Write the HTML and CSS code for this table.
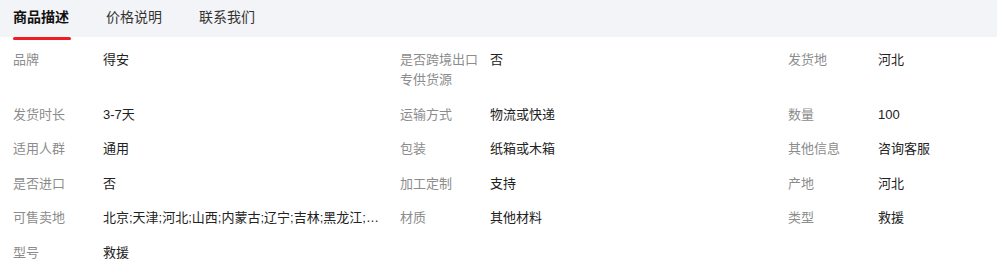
FILE: index.html
```html
<!DOCTYPE html>
<html lang="zh-CN">
<head>
  <meta charset="UTF-8">
  <meta name="viewport" content="width=device-width, initial-scale=1.0">
  <title>商品描述</title>
  <link rel="stylesheet" href="styles.css">
</head>
<body>
  <div class="tabs">
    <span class="tab active">商品描述</span>
    <span class="tab">价格说明</span>
    <span class="tab">联系我们</span>
  </div>

  <div class="attrs">
    <div class="attr"><span class="attr-name">品牌</span><span class="attr-value">得安</span></div>
    <div class="attr"><span class="attr-name">是否跨境出口专供货源</span><span class="attr-value">否</span></div>
    <div class="attr"><span class="attr-name">发货地</span><span class="attr-value">河北</span></div>

    <div class="attr"><span class="attr-name">发货时长</span><span class="attr-value">3-7天</span></div>
    <div class="attr"><span class="attr-name">运输方式</span><span class="attr-value">物流或快递</span></div>
    <div class="attr"><span class="attr-name">数量</span><span class="attr-value">100</span></div>

    <div class="attr"><span class="attr-name">适用人群</span><span class="attr-value">通用</span></div>
    <div class="attr"><span class="attr-name">包装</span><span class="attr-value">纸箱或木箱</span></div>
    <div class="attr"><span class="attr-name">其他信息</span><span class="attr-value">咨询客服</span></div>

    <div class="attr"><span class="attr-name">是否进口</span><span class="attr-value">否</span></div>
    <div class="attr"><span class="attr-name">加工定制</span><span class="attr-value">支持</span></div>
    <div class="attr"><span class="attr-name">产地</span><span class="attr-value">河北</span></div>

    <!-- 地区列表过长，只显示前几项 -->
    <div class="attr"><span class="attr-name">可售卖地</span><span class="attr-value">北京;天津;河北;山西;内蒙古;辽宁;吉林;黑龙江;…</span></div>
    <div class="attr"><span class="attr-name">材质</span><span class="attr-value">其他材料</span></div>
    <div class="attr"><span class="attr-name">类型</span><span class="attr-value">救援</span></div>

    <div class="attr"><span class="attr-name">型号</span><span class="attr-value">救援</span></div>
  </div>
</body>
</html>
```

FILE: styles.css
```css
body {
  margin: 0;
  background: #fff;
  font-family: "Liberation Sans", "Noto Sans CJK SC", sans-serif;
  color: #222;
}

/* tab bar */
.tabs {
  display: flex;
  height: 37px;
  padding-left: 13px;
  background: #f3f4f7;
  gap: 37px;
}
.tab {
  position: relative;
  font-size: 14px;
  line-height: 34px;
  color: #333;
  cursor: pointer;
}
.tab.active {
  font-weight: bold;
  color: #111;
}
.tab.active::after {
  content: "";
  position: absolute;
  left: 0;
  right: -2px;
  bottom: -3px;
  height: 3px;
  border-radius: 2px;
  background: #ee1d23;
}

/* attribute grid */
.attrs {
  display: grid;
  grid-template-columns: 387px 388px 1fr;
  row-gap: 14.5px;
  padding: 13px 0 0 13px;
  font-size: 13px;
  line-height: 20px;
}
.attr {
  display: flex;
  min-width: 0;
  padding-right: 16px;
}
.attr-name {
  flex: 0 0 80px;
  margin-right: 10px;
  color: #8c8c8c;
}
.attr-value {
  flex: 1;
  min-width: 0;
  white-space: nowrap;
  color: #222;
}
```
